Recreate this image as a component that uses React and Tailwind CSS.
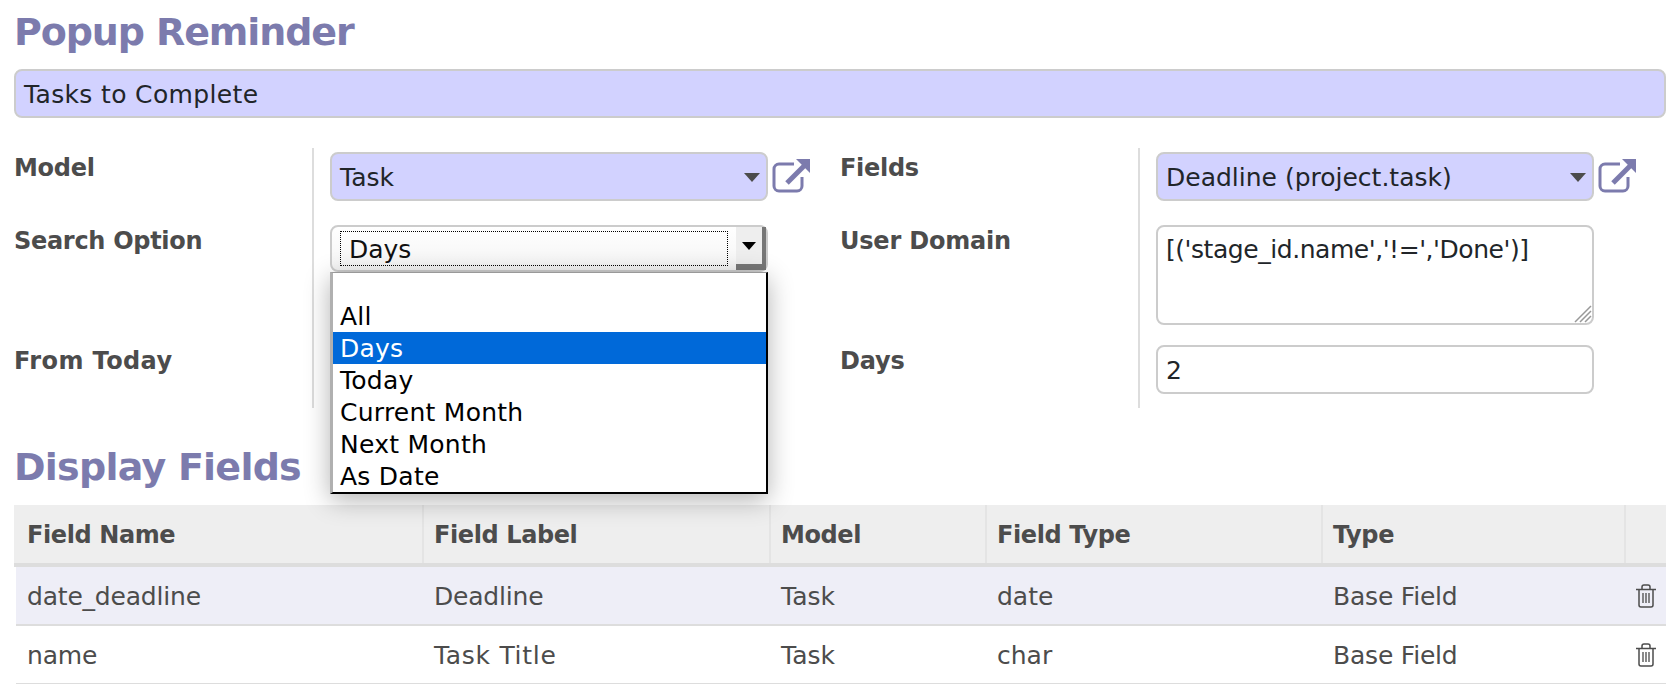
import React from "react";

const headerCols = "grid grid-cols-[410px_347px_216px_336px_303px_1fr]";
const rowCols = "grid grid-cols-[408px_347px_216px_336px_303px_1fr]";

function ExternalLink() {
  return (
    <svg viewBox="0 0 38 36" className="ml-[4px] mt-[6px] h-[36px] w-[38px] shrink-0" fill="none">
      <path d="M22 6H7a5 5 0 0 0-5 5v17a5 5 0 0 0 5 5h18a5 5 0 0 0 5-5v-9" stroke="#7c7bad" strokeWidth="3" />
      <path d="M15 25L33 7" stroke="#7c7bad" strokeWidth="5" />
      <path d="M24 1h14v14z" fill="#7c7bad" />
    </svg>
  );
}

function TrashIcon() {
  return (
    <svg viewBox="0 0 20 24" className="h-[24px] w-[20px]" fill="none" stroke="#4c4c4c" strokeWidth="1.5">
      <path d="M0 5.5h20M6 5V3a2 2 0 0 1 2-2h4a2 2 0 0 1 2 2v2" />
      <path d="M3 6v15a2 2 0 0 0 2 2h10a2 2 0 0 0 2-2V6" />
      <path d="M7 9v10M10 9v10M13 9v10" strokeWidth="1.3" />
    </svg>
  );
}

function SelectBox({ value }) {
  return (
    <div className="flex h-[49px] w-[438px] items-center justify-between rounded-lg border-2 border-[#cccccc] bg-[#d2d2ff] pl-[8px] pr-[6px] text-[#212529]">
      <span className="pt-[3px]">{value}</span>
      <span className="mt-[2px] h-0 w-0 border-x-[8px] border-t-[9px] border-x-transparent border-t-[#4c4c4c]" />
    </div>
  );
}

function Label({ children, className }) {
  return <div className={`text-[24px] font-bold text-[#4c4c4c] ${className}`}>{children}</div>;
}

function Value({ children, className }) {
  return <div className={`border-l-2 border-[#dddddd] pl-[16px] ${className}`}>{children}</div>;
}

function SearchDropdown() {
  const options = ["", "All", "Days", "Today", "Current Month", "Next Month", "As Date"];
  return (
    <div className="absolute left-0 top-[47px] z-10 w-[438px] border-b-[2px] border-l-[3px] border-r-[2px] border-t-[1px] border-b-black border-l-[#b0b0b0] border-r-black border-t-[#999999] bg-white text-black tracking-[0.25px] shadow-[0_6px_24px_rgba(0,0,0,0.3)]">
      {options.map((option) => (
        <div
          key={option}
          className={`pl-[7px] ${option === "" ? "h-[27px]" : "h-[32px] pt-[1px]"} leading-[32px] ${option === "Days" ? "bg-[#0069d9] text-white" : ""}`}
        >
          {option}
        </div>
      ))}
    </div>
  );
}

function SearchSelect() {
  return (
    <div className="relative w-[438px]">
      <div className="flex h-[47px] rounded-lg border-2 border-[#cccccc] bg-gradient-to-b from-white to-[#f4f4f4] pl-[8px]">
        <div className="my-[4px] flex h-[35px] w-[388px] items-center border border-dotted border-black pl-[8px] pt-[3px] text-[#111111]">
          Days
        </div>
        <div className="ml-auto flex w-[30px] items-center justify-center border-b-[6px] border-r-[4px] border-b-[#777777] border-r-[#777777] bg-[#eeeeee]">
          <span className="h-0 w-0 border-x-[7px] border-t-[8px] border-x-transparent border-t-black" />
        </div>
      </div>
      <SearchDropdown />
    </div>
  );
}

function App() {
  const rows = [
    { name: "date_deadline", label: "Deadline", model: "Task", type: "date", kind: "Base Field", bg: "bg-[#eeeef7]" },
    { name: "name", label: "Task Title", model: "Task", type: "char", kind: "Base Field", bg: "bg-white" },
  ];
  const headers = ["Field Name", "Field Label", "Model", "Field Type", "Type", ""];

  return (
    <div className="h-[684px] w-[1678px] overflow-hidden bg-white pl-[14px] pr-[12px] font-['DejaVu_Sans',sans-serif] text-[25px] leading-[32px]">
      <h1 className="pt-[9px] text-[38px] font-bold leading-[46px] tracking-[-1.1px] text-[#7c7bad]">Popup Reminder</h1>
      <div className="mt-[14px] flex h-[49px] items-center rounded-lg border-2 border-[#cccccc] bg-[#d2d2ff] pl-[8px] pt-[3px] tracking-[0.35px] text-[#212529]">
        Tasks to Complete
      </div>

      <div className="mt-[30px] grid grid-cols-[298px_528px_298px_1fr]">
        <Label className="pt-[4px] tracking-[-0.3px]">Model</Label>
        <Value className="flex pb-[24px] pt-[4px]">
          <SelectBox value="Task" />
          <ExternalLink />
        </Value>
        <Label className="pt-[4px] tracking-[-0.3px]">Fields</Label>
        <Value className="flex pb-[24px] pt-[4px]">
          <SelectBox value="Deadline (project.task)" />
          <ExternalLink />
        </Value>

        <Label className="tracking-[-0.3px]">Search Option</Label>
        <Value className="pb-[20px]">
          <SearchSelect />
        </Value>
        <Label className="tracking-[-0.2px]">User Domain</Label>
        <Value className="pb-[20px]">
          <div className="relative h-[100px] w-[438px] rounded-lg border-2 border-[#cccccc] bg-white pl-[8px] pt-[7px] tracking-[-0.45px] text-[#212529]">
            [('stage_id.name','!=','Done')]
            <svg viewBox="0 0 20 20" className="absolute bottom-0 right-0 h-[20px] w-[20px]" stroke="#999999" strokeWidth="1.5">
              <path d="M3 19L19 3M8 19L19 8M13 19L19 13" />
            </svg>
          </div>
        </Value>

        <Label className="tracking-[0.4px]">From Today</Label>
        <Value className="pb-[14px]">
          <div className="h-[49px]" />
        </Value>
        <Label className="tracking-[-0.2px]">Days</Label>
        <Value className="pb-[14px]">
          <div className="flex h-[49px] w-[438px] items-center rounded-lg border-2 border-[#cccccc] bg-white pl-[8px] pt-[2px] text-[#212529]">
            2
          </div>
        </Value>
      </div>

      <h2 className="mt-[36px] text-[38px] font-bold leading-[46px] tracking-[-0.75px] text-[#7c7bad]">Display Fields</h2>

      <div className="mt-[15px]">
        <div className={`${headerCols} h-[62px] border-b-[4px] border-[#dddddd] bg-[#eeeeee] text-[24px] font-bold tracking-[-0.4px] text-[#4c4c4c]`}>
          {headers.map((header, i) => (
            <div key={i} className="flex items-center border-r-2 border-[#e4e4e4] pl-[10px] pt-[2px] first:pl-[13px] last:border-r-0">
              {header}
            </div>
          ))}
        </div>
        {rows.map((row) => (
          <div key={row.name} className={`${rowCols} ml-[2px] h-[59px] border-b-2 border-[#dddddd] text-[#4c4c4c] ${row.bg}`}>
            <div className="flex items-center pl-[11px] pt-[2px] tracking-[-0.2px]">{row.name}</div>
            <div className={`flex items-center pl-[10px] pt-[2px] ${row.name === "name" ? "tracking-[0.7px]" : "tracking-[-0.2px]"}`}>{row.label}</div>
            <div className="flex items-center pl-[10px] pt-[2px]">{row.model}</div>
            <div className="flex items-center pl-[10px] pt-[2px]">{row.type}</div>
            <div className="flex items-center pl-[10px] pt-[2px] tracking-[-0.2px]">{row.kind}</div>
            <div className="flex items-center justify-end pr-[10px]">
              <TrashIcon />
            </div>
          </div>
        ))}
      </div>
    </div>
  );
}

export default App;
